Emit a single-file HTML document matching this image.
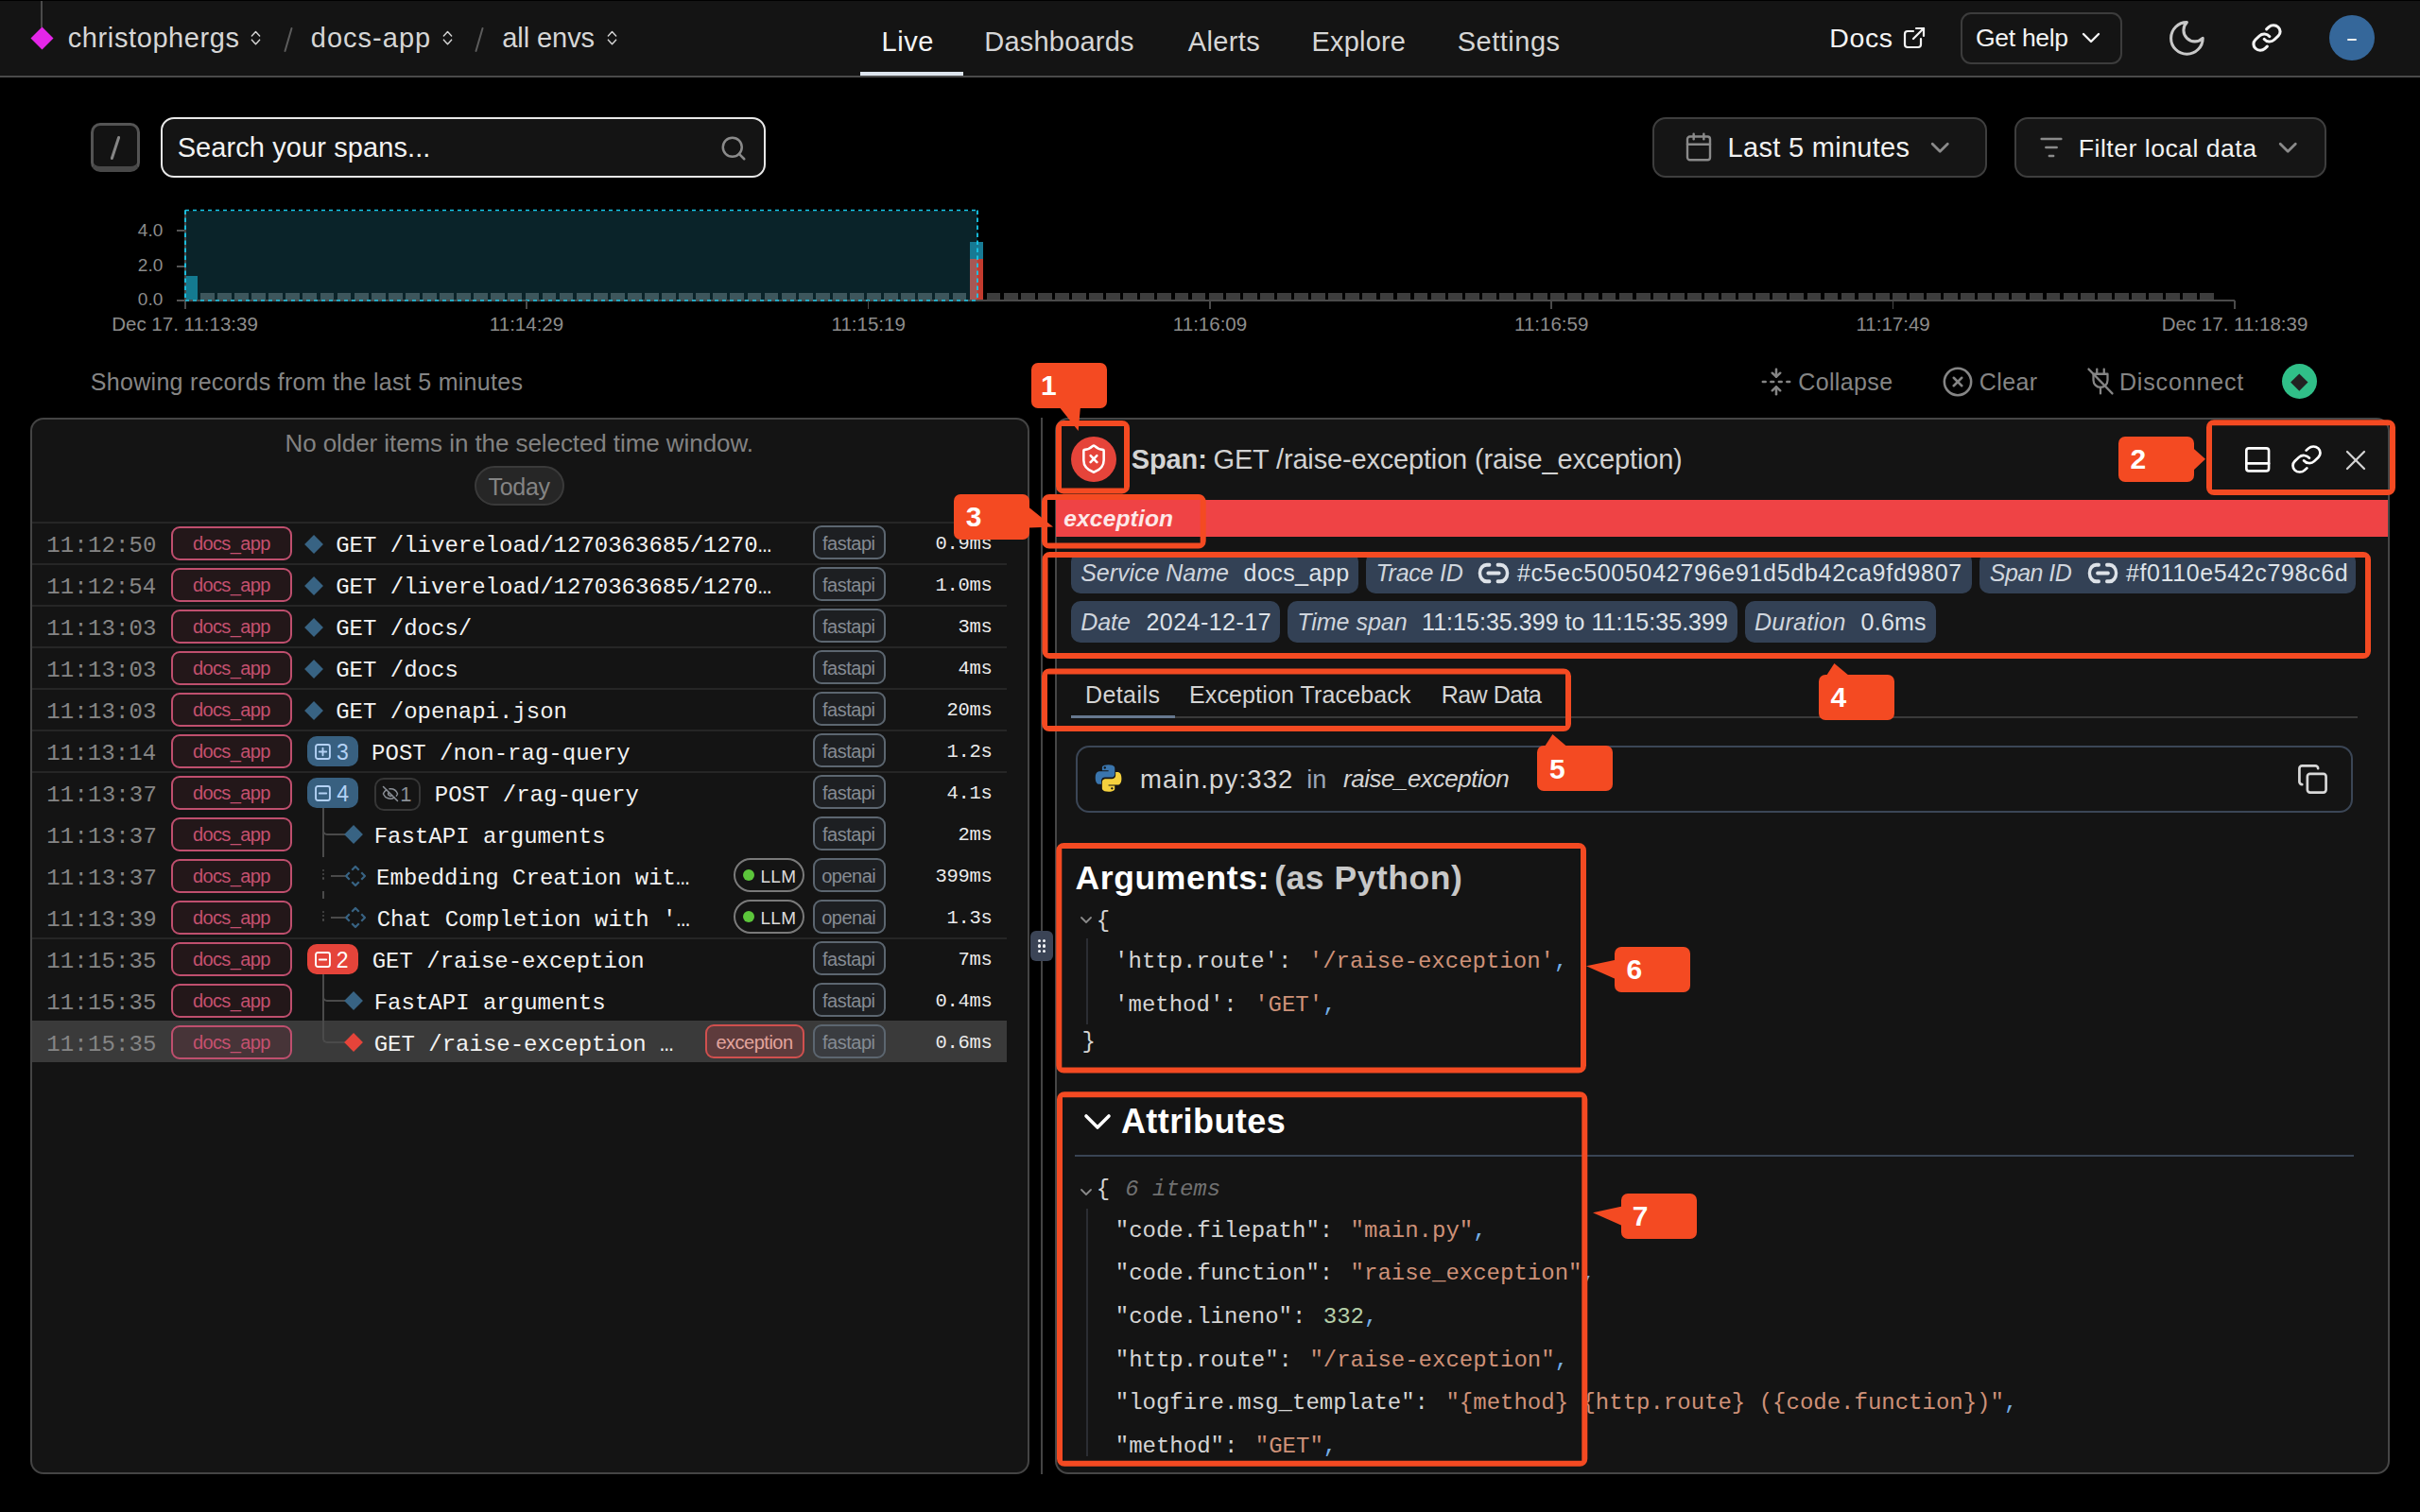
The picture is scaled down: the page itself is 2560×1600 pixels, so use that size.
<!DOCTYPE html>
<html><head><meta charset="utf-8"><style>
html,body{margin:0;padding:0;background:#000;width:2560px;height:1600px;overflow:hidden;position:relative;font-family:'Liberation Sans', sans-serif}
</style></head><body>
<div style="position:absolute;left:0px;top:1px;width:2560px;height:79px;background:#141414"></div>
<div style="position:absolute;left:0px;top:80px;width:2560px;height:2px;background:#4a4a4a"></div>
<div style="position:absolute;left:43px;top:1px;width:2px;height:28px;background:#4a4a4a"></div>
<div style="position:absolute;left:35.5px;top:31.5px;width:17px;height:17px;background:#e426e8;transform:rotate(45deg)"></div>
<div style="position:absolute;top:26.00px;font-family:'Liberation Sans', sans-serif;font-size:29px;line-height:29px;color:#d6d6d6;white-space:pre;letter-spacing:0.600px;left:71.77px;">christophergs</div>
<div style="position:absolute;top:26.00px;font-family:'Liberation Sans', sans-serif;font-size:29px;line-height:29px;color:#d6d6d6;white-space:pre;letter-spacing:1.019px;left:328.78px;">docs-app</div>
<div style="position:absolute;top:26.00px;font-family:'Liberation Sans', sans-serif;font-size:29px;line-height:29px;color:#d6d6d6;white-space:pre;letter-spacing:-0.078px;left:531.27px;">all envs</div>
<svg style="position:absolute;left:265.0px;top:32px;width:11.0px;height:16px;overflow:visible" viewBox="0 0 12 16" preserveAspectRatio="none" fill="none" stroke="#d6d6d6" stroke-width="1.6" stroke-linecap="round" stroke-linejoin="round" ><path d="M1.5 6 L6 1.5 L10.5 6"/><path d="M1.5 10.2 L6 14.7 L10.5 10.2"/></svg>
<svg style="position:absolute;left:467.5px;top:32px;width:11.0px;height:16px;overflow:visible" viewBox="0 0 12 16" preserveAspectRatio="none" fill="none" stroke="#d6d6d6" stroke-width="1.6" stroke-linecap="round" stroke-linejoin="round" ><path d="M1.5 6 L6 1.5 L10.5 6"/><path d="M1.5 10.2 L6 14.7 L10.5 10.2"/></svg>
<svg style="position:absolute;left:641.5px;top:32px;width:11.0px;height:16px;overflow:visible" viewBox="0 0 12 16" preserveAspectRatio="none" fill="none" stroke="#d6d6d6" stroke-width="1.6" stroke-linecap="round" stroke-linejoin="round" ><path d="M1.5 6 L6 1.5 L10.5 6"/><path d="M1.5 10.2 L6 14.7 L10.5 10.2"/></svg>
<svg style="position:absolute;left:300px;top:29px;width:10px;height:26px;overflow:visible" viewBox="0 0 10 26" preserveAspectRatio="none" fill="none" stroke="#5c5c5c" stroke-width="2" stroke-linecap="round" stroke-linejoin="round" ><path d="M8.5 1 L1.5 25"/></svg>
<svg style="position:absolute;left:502px;top:29px;width:10px;height:26px;overflow:visible" viewBox="0 0 10 26" preserveAspectRatio="none" fill="none" stroke="#5c5c5c" stroke-width="2" stroke-linecap="round" stroke-linejoin="round" ><path d="M8.5 1 L1.5 25"/></svg>
<div style="position:absolute;top:30.00px;font-family:'Liberation Sans', sans-serif;font-size:29px;line-height:29px;color:#f4f4f4;white-space:pre;letter-spacing:0.489px;left:932.62px;">Live</div>
<div style="position:absolute;top:30.00px;font-family:'Liberation Sans', sans-serif;font-size:29px;line-height:29px;color:#d6d6d6;white-space:pre;letter-spacing:0.206px;left:1041.32px;">Dashboards</div>
<div style="position:absolute;top:30.00px;font-family:'Liberation Sans', sans-serif;font-size:29px;line-height:29px;color:#d6d6d6;white-space:pre;letter-spacing:0.375px;left:1256.74px;">Alerts</div>
<div style="position:absolute;top:30.00px;font-family:'Liberation Sans', sans-serif;font-size:29px;line-height:29px;color:#d6d6d6;white-space:pre;letter-spacing:0.157px;left:1387.62px;">Explore</div>
<div style="position:absolute;top:30.00px;font-family:'Liberation Sans', sans-serif;font-size:29px;line-height:29px;color:#d6d6d6;white-space:pre;letter-spacing:0.511px;left:1541.68px;">Settings</div>
<div style="position:absolute;left:910px;top:76px;width:109px;height:4px;background:#dde5ee"></div>
<div style="position:absolute;top:26.00px;font-family:'Liberation Sans', sans-serif;font-size:28.5px;line-height:28.5px;color:#f4f4f4;white-space:pre;letter-spacing:0.579px;left:1935.36px;">Docs</div>
<svg style="position:absolute;left:2013px;top:28px;width:24px;height:24px;overflow:visible" viewBox="0 0 24 24" preserveAspectRatio="none" fill="none" stroke="#f4f4f4" stroke-width="2.2" stroke-linecap="round" stroke-linejoin="round" ><path d="M14 2h8v8"/><path d="M11 13 22 2"/><path d="M19 13v6a3 3 0 0 1-3 3H5a3 3 0 0 1-3-3V8a3 3 0 0 1 3-3h6"/></svg>
<div style="position:absolute;left:2074px;top:12.5px;width:171px;height:55.0px;box-sizing:border-box;border:2px solid #3c3c3c;border-radius:11px;background:#141414"></div>
<div style="position:absolute;top:27.00px;font-family:'Liberation Sans', sans-serif;font-size:26.5px;line-height:26.5px;color:#f4f4f4;white-space:pre;letter-spacing:-0.305px;left:2090.07px;">Get help</div>
<svg style="position:absolute;left:2203px;top:35px;width:18px;height:10px;overflow:visible" viewBox="0 0 18 10" preserveAspectRatio="none" fill="none" stroke="#f4f4f4" stroke-width="2.4" stroke-linecap="round" stroke-linejoin="round" ><path d="M1 1 L9 9 L17 1"/></svg>
<svg style="position:absolute;left:2291.4px;top:17.6px;width:44.79999999999973px;height:44.8px;overflow:visible" viewBox="0 0 24 24" preserveAspectRatio="none" fill="none" stroke="#c8c8c8" stroke-width="1.65" stroke-linecap="round" stroke-linejoin="round" ><path d="M12 3a6 6 0 0 0 9 9 9 9 0 1 1-9-9Z"/></svg>
<svg style="position:absolute;left:2381px;top:24px;width:34px;height:32px;overflow:visible" viewBox="0 0 24 24" preserveAspectRatio="none" fill="none" stroke="#f4f4f4" stroke-width="2.2" stroke-linecap="round" stroke-linejoin="round" ><path d="M10 13a5 5 0 0 0 7.54.54l3-3a5 5 0 0 0-7.07-7.07l-1.72 1.71"/><path d="M14 11a5 5 0 0 0-7.54-.54l-3 3a5 5 0 0 0 7.07 7.07l1.71-1.71"/></svg>
<div style="position:absolute;left:2464px;top:16px;width:48px;height:48px;border-radius:50%;background:#35679a"></div>
<div style="position:absolute;left:2483px;top:40.8px;width:10px;height:2.200000000000003px;background:#f0f0f0;border-radius:1px"></div>
<div style="position:absolute;left:96.3px;top:130px;width:51.60000000000001px;height:51.80000000000001px;box-sizing:border-box;border:3.6px solid #545454;border-bottom:6px solid #484848;border-radius:10px;background:#131313"></div>
<svg style="position:absolute;left:116px;top:144px;width:12px;height:25px;overflow:visible" viewBox="0 0 12 25" preserveAspectRatio="none" fill="none" stroke="#858585" stroke-width="3" stroke-linecap="round" stroke-linejoin="round" ><path d="M9.6 1.5 L2.4 23.5"/></svg>
<div style="position:absolute;left:170px;top:124px;width:640px;height:64px;box-sizing:border-box;border:2px solid #e8e8e8;border-radius:14px;background:#141414"></div>
<div style="position:absolute;top:142.00px;font-family:'Liberation Sans', sans-serif;font-size:29px;line-height:29px;color:#f2f2f2;white-space:pre;letter-spacing:0.089px;left:187.68px;">Search your spans...</div>
<svg style="position:absolute;left:761px;top:142px;width:30px;height:30px;overflow:visible" viewBox="0 0 24 24" preserveAspectRatio="none" fill="none" stroke="#8a8a8a" stroke-width="2" stroke-linecap="round" stroke-linejoin="round" ><circle cx="11" cy="11" r="8"/><path d="m21 21-4.3-4.3"/></svg>
<div style="position:absolute;left:1747.5px;top:124px;width:354.5px;height:64px;box-sizing:border-box;border:2px solid #3e3e3e;border-radius:14px;background:#151515"></div>
<svg style="position:absolute;left:1781px;top:139px;width:32px;height:33px;overflow:visible" viewBox="0 0 24 24" preserveAspectRatio="none" fill="none" stroke="#8a8a8a" stroke-width="1.8" stroke-linecap="round" stroke-linejoin="round" ><rect width="18" height="18" x="3" y="4" rx="2" ry="2"/><line x1="16" x2="16" y1="2" y2="6"/><line x1="8" x2="8" y1="2" y2="6"/><line x1="3" x2="21" y1="10" y2="10"/></svg>
<div style="position:absolute;top:142.00px;font-family:'Liberation Sans', sans-serif;font-size:29px;line-height:29px;color:#f2f2f2;white-space:pre;letter-spacing:0.294px;left:1827.62px;">Last 5 minutes</div>
<svg style="position:absolute;left:2042.5px;top:150.5px;width:18.5px;height:10.5px;overflow:visible" viewBox="0 0 18.5 10.5" preserveAspectRatio="none" fill="none" stroke="#8a8a8a" stroke-width="2.8" stroke-linecap="round" stroke-linejoin="round" ><path d="M1.2 1.2 L9.25 9.3 L17.3 1.2"/></svg>
<div style="position:absolute;left:2131px;top:124px;width:330px;height:64px;box-sizing:border-box;border:2px solid #3e3e3e;border-radius:14px;background:#151515"></div>
<svg style="position:absolute;left:2156px;top:138px;width:28px;height:36px;overflow:visible" viewBox="0 0 24 24" preserveAspectRatio="none" fill="none" stroke="#8a8a8a" stroke-width="1.8" stroke-linecap="round" stroke-linejoin="round" ><path d="M3 6h18"/><path d="M7 12h10"/><path d="M10 18h4"/></svg>
<div style="position:absolute;top:144.00px;font-family:'Liberation Sans', sans-serif;font-size:26.6px;line-height:26.6px;color:#f2f2f2;white-space:pre;letter-spacing:0.491px;left:2198.82px;">Filter local data</div>
<svg style="position:absolute;left:2411px;top:150.5px;width:18.5px;height:10.5px;overflow:visible" viewBox="0 0 18.5 10.5" preserveAspectRatio="none" fill="none" stroke="#8a8a8a" stroke-width="2.8" stroke-linecap="round" stroke-linejoin="round" ><path d="M1.2 1.2 L9.25 9.3 L17.3 1.2"/></svg>
<div style="position:absolute;top:234.00px;font-family:'Liberation Sans', sans-serif;font-size:19px;line-height:19px;color:#8c8c8c;white-space:pre;left:145.83px;">4.0</div>
<div style="position:absolute;top:271.00px;font-family:'Liberation Sans', sans-serif;font-size:19px;line-height:19px;color:#8c8c8c;white-space:pre;left:145.83px;">2.0</div>
<div style="position:absolute;top:307.00px;font-family:'Liberation Sans', sans-serif;font-size:19px;line-height:19px;color:#8c8c8c;white-space:pre;left:145.83px;">0.0</div>
<div style="position:absolute;left:187px;top:243.2px;width:8px;height:1.6000000000000227px;background:#555"></div>
<div style="position:absolute;left:187px;top:281.2px;width:8px;height:1.6000000000000227px;background:#555"></div>
<div style="position:absolute;left:187px;top:317.2px;width:8px;height:1.6000000000000227px;background:#555"></div>
<div style="position:absolute;left:196px;top:222.5px;width:838px;height:95.5px;background:#0a2329"></div>
<div style="position:absolute;left:195.2px;top:222px;width:1.6000000000000227px;height:105px;background:#4a4a4a"></div>
<div style="position:absolute;left:212.00px;top:310.2px;width:14.8px;height:6.8px;background:#3d565c"></div><div style="position:absolute;left:230.08px;top:310.2px;width:14.8px;height:6.8px;background:#3d565c"></div><div style="position:absolute;left:248.16px;top:310.2px;width:14.8px;height:6.8px;background:#3d565c"></div><div style="position:absolute;left:266.24px;top:310.2px;width:14.8px;height:6.8px;background:#3d565c"></div><div style="position:absolute;left:284.32px;top:310.2px;width:14.8px;height:6.8px;background:#3d565c"></div><div style="position:absolute;left:302.40px;top:310.2px;width:14.8px;height:6.8px;background:#3d565c"></div><div style="position:absolute;left:320.48px;top:310.2px;width:14.8px;height:6.8px;background:#3d565c"></div><div style="position:absolute;left:338.56px;top:310.2px;width:14.8px;height:6.8px;background:#3d565c"></div><div style="position:absolute;left:356.64px;top:310.2px;width:14.8px;height:6.8px;background:#3d565c"></div><div style="position:absolute;left:374.72px;top:310.2px;width:14.8px;height:6.8px;background:#3d565c"></div><div style="position:absolute;left:392.80px;top:310.2px;width:14.8px;height:6.8px;background:#3d565c"></div><div style="position:absolute;left:410.88px;top:310.2px;width:14.8px;height:6.8px;background:#3d565c"></div><div style="position:absolute;left:428.96px;top:310.2px;width:14.8px;height:6.8px;background:#3d565c"></div><div style="position:absolute;left:447.04px;top:310.2px;width:14.8px;height:6.8px;background:#3d565c"></div><div style="position:absolute;left:465.12px;top:310.2px;width:14.8px;height:6.8px;background:#3d565c"></div><div style="position:absolute;left:483.20px;top:310.2px;width:14.8px;height:6.8px;background:#3d565c"></div><div style="position:absolute;left:501.28px;top:310.2px;width:14.8px;height:6.8px;background:#3d565c"></div><div style="position:absolute;left:519.36px;top:310.2px;width:14.8px;height:6.8px;background:#3d565c"></div><div style="position:absolute;left:537.44px;top:310.2px;width:14.8px;height:6.8px;background:#3d565c"></div><div style="position:absolute;left:555.52px;top:310.2px;width:14.8px;height:6.8px;background:#3d565c"></div><div style="position:absolute;left:573.60px;top:310.2px;width:14.8px;height:6.8px;background:#3d565c"></div><div style="position:absolute;left:591.68px;top:310.2px;width:14.8px;height:6.8px;background:#3d565c"></div><div style="position:absolute;left:609.76px;top:310.2px;width:14.8px;height:6.8px;background:#3d565c"></div><div style="position:absolute;left:627.84px;top:310.2px;width:14.8px;height:6.8px;background:#3d565c"></div><div style="position:absolute;left:645.92px;top:310.2px;width:14.8px;height:6.8px;background:#3d565c"></div><div style="position:absolute;left:664.00px;top:310.2px;width:14.8px;height:6.8px;background:#3d565c"></div><div style="position:absolute;left:682.08px;top:310.2px;width:14.8px;height:6.8px;background:#3d565c"></div><div style="position:absolute;left:700.16px;top:310.2px;width:14.8px;height:6.8px;background:#3d565c"></div><div style="position:absolute;left:718.24px;top:310.2px;width:14.8px;height:6.8px;background:#3d565c"></div><div style="position:absolute;left:736.32px;top:310.2px;width:14.8px;height:6.8px;background:#3d565c"></div><div style="position:absolute;left:754.40px;top:310.2px;width:14.8px;height:6.8px;background:#3d565c"></div><div style="position:absolute;left:772.48px;top:310.2px;width:14.8px;height:6.8px;background:#3d565c"></div><div style="position:absolute;left:790.56px;top:310.2px;width:14.8px;height:6.8px;background:#3d565c"></div><div style="position:absolute;left:808.64px;top:310.2px;width:14.8px;height:6.8px;background:#3d565c"></div><div style="position:absolute;left:826.72px;top:310.2px;width:14.8px;height:6.8px;background:#3d565c"></div><div style="position:absolute;left:844.80px;top:310.2px;width:14.8px;height:6.8px;background:#3d565c"></div><div style="position:absolute;left:862.88px;top:310.2px;width:14.8px;height:6.8px;background:#3d565c"></div><div style="position:absolute;left:880.96px;top:310.2px;width:14.8px;height:6.8px;background:#3d565c"></div><div style="position:absolute;left:899.04px;top:310.2px;width:14.8px;height:6.8px;background:#3d565c"></div><div style="position:absolute;left:917.12px;top:310.2px;width:14.8px;height:6.8px;background:#3d565c"></div><div style="position:absolute;left:935.20px;top:310.2px;width:14.8px;height:6.8px;background:#3d565c"></div><div style="position:absolute;left:953.28px;top:310.2px;width:14.8px;height:6.8px;background:#3d565c"></div><div style="position:absolute;left:971.36px;top:310.2px;width:14.8px;height:6.8px;background:#3d565c"></div><div style="position:absolute;left:989.44px;top:310.2px;width:14.8px;height:6.8px;background:#3d565c"></div><div style="position:absolute;left:1007.52px;top:310.2px;width:14.8px;height:6.8px;background:#3d565c"></div><div style="position:absolute;left:1043.68px;top:310.2px;width:14.8px;height:6.8px;background:#3d3d3d"></div><div style="position:absolute;left:1061.76px;top:310.2px;width:14.8px;height:6.8px;background:#3d3d3d"></div><div style="position:absolute;left:1079.84px;top:310.2px;width:14.8px;height:6.8px;background:#3d3d3d"></div><div style="position:absolute;left:1097.92px;top:310.2px;width:14.8px;height:6.8px;background:#3d3d3d"></div><div style="position:absolute;left:1116.00px;top:310.2px;width:14.8px;height:6.8px;background:#3d3d3d"></div><div style="position:absolute;left:1134.08px;top:310.2px;width:14.8px;height:6.8px;background:#3d3d3d"></div><div style="position:absolute;left:1152.16px;top:310.2px;width:14.8px;height:6.8px;background:#3d3d3d"></div><div style="position:absolute;left:1170.24px;top:310.2px;width:14.8px;height:6.8px;background:#3d3d3d"></div><div style="position:absolute;left:1188.32px;top:310.2px;width:14.8px;height:6.8px;background:#3d3d3d"></div><div style="position:absolute;left:1206.40px;top:310.2px;width:14.8px;height:6.8px;background:#3d3d3d"></div><div style="position:absolute;left:1224.48px;top:310.2px;width:14.8px;height:6.8px;background:#3d3d3d"></div><div style="position:absolute;left:1242.56px;top:310.2px;width:14.8px;height:6.8px;background:#3d3d3d"></div><div style="position:absolute;left:1260.64px;top:310.2px;width:14.8px;height:6.8px;background:#3d3d3d"></div><div style="position:absolute;left:1278.72px;top:310.2px;width:14.8px;height:6.8px;background:#3d3d3d"></div><div style="position:absolute;left:1296.80px;top:310.2px;width:14.8px;height:6.8px;background:#3d3d3d"></div><div style="position:absolute;left:1314.88px;top:310.2px;width:14.8px;height:6.8px;background:#3d3d3d"></div><div style="position:absolute;left:1332.96px;top:310.2px;width:14.8px;height:6.8px;background:#3d3d3d"></div><div style="position:absolute;left:1351.04px;top:310.2px;width:14.8px;height:6.8px;background:#3d3d3d"></div><div style="position:absolute;left:1369.12px;top:310.2px;width:14.8px;height:6.8px;background:#3d3d3d"></div><div style="position:absolute;left:1387.20px;top:310.2px;width:14.8px;height:6.8px;background:#3d3d3d"></div><div style="position:absolute;left:1405.28px;top:310.2px;width:14.8px;height:6.8px;background:#3d3d3d"></div><div style="position:absolute;left:1423.36px;top:310.2px;width:14.8px;height:6.8px;background:#3d3d3d"></div><div style="position:absolute;left:1441.44px;top:310.2px;width:14.8px;height:6.8px;background:#3d3d3d"></div><div style="position:absolute;left:1459.52px;top:310.2px;width:14.8px;height:6.8px;background:#3d3d3d"></div><div style="position:absolute;left:1477.60px;top:310.2px;width:14.8px;height:6.8px;background:#3d3d3d"></div><div style="position:absolute;left:1495.68px;top:310.2px;width:14.8px;height:6.8px;background:#3d3d3d"></div><div style="position:absolute;left:1513.76px;top:310.2px;width:14.8px;height:6.8px;background:#3d3d3d"></div><div style="position:absolute;left:1531.84px;top:310.2px;width:14.8px;height:6.8px;background:#3d3d3d"></div><div style="position:absolute;left:1549.92px;top:310.2px;width:14.8px;height:6.8px;background:#3d3d3d"></div><div style="position:absolute;left:1568.00px;top:310.2px;width:14.8px;height:6.8px;background:#3d3d3d"></div><div style="position:absolute;left:1586.08px;top:310.2px;width:14.8px;height:6.8px;background:#3d3d3d"></div><div style="position:absolute;left:1604.16px;top:310.2px;width:14.8px;height:6.8px;background:#3d3d3d"></div><div style="position:absolute;left:1622.24px;top:310.2px;width:14.8px;height:6.8px;background:#3d3d3d"></div><div style="position:absolute;left:1640.32px;top:310.2px;width:14.8px;height:6.8px;background:#3d3d3d"></div><div style="position:absolute;left:1658.40px;top:310.2px;width:14.8px;height:6.8px;background:#3d3d3d"></div><div style="position:absolute;left:1676.48px;top:310.2px;width:14.8px;height:6.8px;background:#3d3d3d"></div><div style="position:absolute;left:1694.56px;top:310.2px;width:14.8px;height:6.8px;background:#3d3d3d"></div><div style="position:absolute;left:1712.64px;top:310.2px;width:14.8px;height:6.8px;background:#3d3d3d"></div><div style="position:absolute;left:1730.72px;top:310.2px;width:14.8px;height:6.8px;background:#3d3d3d"></div><div style="position:absolute;left:1748.80px;top:310.2px;width:14.8px;height:6.8px;background:#3d3d3d"></div><div style="position:absolute;left:1766.88px;top:310.2px;width:14.8px;height:6.8px;background:#3d3d3d"></div><div style="position:absolute;left:1784.96px;top:310.2px;width:14.8px;height:6.8px;background:#3d3d3d"></div><div style="position:absolute;left:1803.04px;top:310.2px;width:14.8px;height:6.8px;background:#3d3d3d"></div><div style="position:absolute;left:1821.12px;top:310.2px;width:14.8px;height:6.8px;background:#3d3d3d"></div><div style="position:absolute;left:1839.20px;top:310.2px;width:14.8px;height:6.8px;background:#3d3d3d"></div><div style="position:absolute;left:1857.28px;top:310.2px;width:14.8px;height:6.8px;background:#3d3d3d"></div><div style="position:absolute;left:1875.36px;top:310.2px;width:14.8px;height:6.8px;background:#3d3d3d"></div><div style="position:absolute;left:1893.44px;top:310.2px;width:14.8px;height:6.8px;background:#3d3d3d"></div><div style="position:absolute;left:1911.52px;top:310.2px;width:14.8px;height:6.8px;background:#3d3d3d"></div><div style="position:absolute;left:1929.60px;top:310.2px;width:14.8px;height:6.8px;background:#3d3d3d"></div><div style="position:absolute;left:1947.68px;top:310.2px;width:14.8px;height:6.8px;background:#3d3d3d"></div><div style="position:absolute;left:1965.76px;top:310.2px;width:14.8px;height:6.8px;background:#3d3d3d"></div><div style="position:absolute;left:1983.84px;top:310.2px;width:14.8px;height:6.8px;background:#3d3d3d"></div><div style="position:absolute;left:2001.92px;top:310.2px;width:14.8px;height:6.8px;background:#3d3d3d"></div><div style="position:absolute;left:2020.00px;top:310.2px;width:14.8px;height:6.8px;background:#3d3d3d"></div><div style="position:absolute;left:2038.08px;top:310.2px;width:14.8px;height:6.8px;background:#3d3d3d"></div><div style="position:absolute;left:2056.16px;top:310.2px;width:14.8px;height:6.8px;background:#3d3d3d"></div><div style="position:absolute;left:2074.24px;top:310.2px;width:14.8px;height:6.8px;background:#3d3d3d"></div><div style="position:absolute;left:2092.32px;top:310.2px;width:14.8px;height:6.8px;background:#3d3d3d"></div><div style="position:absolute;left:2110.40px;top:310.2px;width:14.8px;height:6.8px;background:#3d3d3d"></div><div style="position:absolute;left:2128.48px;top:310.2px;width:14.8px;height:6.8px;background:#3d3d3d"></div><div style="position:absolute;left:2146.56px;top:310.2px;width:14.8px;height:6.8px;background:#3d3d3d"></div><div style="position:absolute;left:2164.64px;top:310.2px;width:14.8px;height:6.8px;background:#3d3d3d"></div><div style="position:absolute;left:2182.72px;top:310.2px;width:14.8px;height:6.8px;background:#3d3d3d"></div><div style="position:absolute;left:2200.80px;top:310.2px;width:14.8px;height:6.8px;background:#3d3d3d"></div><div style="position:absolute;left:2218.88px;top:310.2px;width:14.8px;height:6.8px;background:#3d3d3d"></div><div style="position:absolute;left:2236.96px;top:310.2px;width:14.8px;height:6.8px;background:#3d3d3d"></div><div style="position:absolute;left:2255.04px;top:310.2px;width:14.8px;height:6.8px;background:#3d3d3d"></div><div style="position:absolute;left:2273.12px;top:310.2px;width:14.8px;height:6.8px;background:#3d3d3d"></div><div style="position:absolute;left:2291.20px;top:310.2px;width:14.8px;height:6.8px;background:#3d3d3d"></div><div style="position:absolute;left:2309.28px;top:310.2px;width:14.8px;height:6.8px;background:#3d3d3d"></div><div style="position:absolute;left:2327.36px;top:310.2px;width:14.8px;height:6.8px;background:#3d3d3d"></div>
<div style="position:absolute;left:196.7px;top:292px;width:12.5px;height:25px;background:#147a90"></div>
<div style="position:absolute;left:1025.6px;top:256px;width:14.800000000000182px;height:18px;background:#177a94"></div>
<div style="position:absolute;left:1025.6px;top:274px;width:8.400000000000091px;height:43px;background:#a65855"></div>
<div style="position:absolute;left:1034px;top:274px;width:6.400000000000091px;height:43px;background:#c33b2e"></div>
<div style="position:absolute;left:195px;top:317.2px;width:2169px;height:1.6000000000000227px;background:#4a4a4a"></div>
<svg style="position:absolute;left:0;top:0;width:2560px;height:400px" viewBox="0 0 2560 400"><path d="M196 222.5 H1034" fill="none" stroke="#17c8ea" stroke-width="1.6" stroke-dasharray="4 4"/><path d="M196 318 H1034" fill="none" stroke="#17c8ea" stroke-width="1.6" stroke-dasharray="4 4"/><path d="M196 222.5 V318" fill="none" stroke="#17c8ea" stroke-width="1.8" stroke-dasharray="4.5 3.5"/><path d="M1034 222.5 V318" fill="none" stroke="#17c8ea" stroke-width="1.8" stroke-dasharray="4.5 3.5"/></svg>
<div style="position:absolute;left:194.7px;top:318px;width:1.6000000000000227px;height:9px;background:#4a4a4a"></div>
<div style="position:absolute;top:333.00px;font-family:'Liberation Sans', sans-serif;font-size:20.5px;line-height:20.5px;color:#8c8c8c;white-space:pre;left:118.19px;">Dec 17. 11:13:39</div>
<div style="position:absolute;left:556.2px;top:318px;width:1.599999999999909px;height:9px;background:#4a4a4a"></div>
<div style="position:absolute;top:333.00px;font-family:'Liberation Sans', sans-serif;font-size:20.5px;line-height:20.5px;color:#8c8c8c;white-space:pre;left:517.86px;">11:14:29</div>
<div style="position:absolute;left:917.9000000000001px;top:318px;width:1.599999999999909px;height:9px;background:#4a4a4a"></div>
<div style="position:absolute;top:333.00px;font-family:'Liberation Sans', sans-serif;font-size:20.5px;line-height:20.5px;color:#8c8c8c;white-space:pre;left:879.56px;">11:15:19</div>
<div style="position:absolute;left:1279.2px;top:318px;width:1.599999999999909px;height:9px;background:#4a4a4a"></div>
<div style="position:absolute;top:333.00px;font-family:'Liberation Sans', sans-serif;font-size:20.5px;line-height:20.5px;color:#8c8c8c;white-space:pre;left:1240.86px;">11:16:09</div>
<div style="position:absolute;left:1640.4px;top:318px;width:1.599999999999909px;height:9px;background:#4a4a4a"></div>
<div style="position:absolute;top:333.00px;font-family:'Liberation Sans', sans-serif;font-size:20.5px;line-height:20.5px;color:#8c8c8c;white-space:pre;left:1602.06px;">11:16:59</div>
<div style="position:absolute;left:2001.8px;top:318px;width:1.599999999999909px;height:9px;background:#4a4a4a"></div>
<div style="position:absolute;top:333.00px;font-family:'Liberation Sans', sans-serif;font-size:20.5px;line-height:20.5px;color:#8c8c8c;white-space:pre;left:1963.46px;">11:17:49</div>
<div style="position:absolute;left:2363.2px;top:318px;width:1.6000000000003638px;height:9px;background:#4a4a4a"></div>
<div style="position:absolute;top:333.00px;font-family:'Liberation Sans', sans-serif;font-size:20.5px;line-height:20.5px;color:#8c8c8c;white-space:pre;left:2286.69px;">Dec 17. 11:18:39</div>
<div style="position:absolute;top:392.00px;font-family:'Liberation Sans', sans-serif;font-size:25px;line-height:25px;color:#858585;white-space:pre;letter-spacing:0.290px;left:95.86px;">Showing records from the last 5 minutes</div>
<svg style="position:absolute;left:1862px;top:388px;width:34px;height:32px;overflow:visible" viewBox="0 0 24 24" preserveAspectRatio="none" fill="none" stroke="#858585" stroke-width="1.8" stroke-linecap="round" stroke-linejoin="round" ><path d="M12 22v-6"/><path d="M12 8V2"/><path d="M4 12H2"/><path d="M10 12H8"/><path d="M16 12h-2"/><path d="M22 12h-2"/><path d="m15 19-3-3-3 3"/><path d="m15 5-3 3-3-3"/></svg>
<div style="position:absolute;top:392.00px;font-family:'Liberation Sans', sans-serif;font-size:25px;line-height:25px;color:#858585;white-space:pre;letter-spacing:0.372px;left:1902.23px;">Collapse</div>
<svg style="position:absolute;left:2054px;top:387px;width:34px;height:34px;overflow:visible" viewBox="0 0 24 24" preserveAspectRatio="none" fill="none" stroke="#858585" stroke-width="1.8" stroke-linecap="round" stroke-linejoin="round" ><circle cx="12" cy="12" r="10"/><path d="m15 9-6 6"/><path d="m9 9 6 6"/></svg>
<div style="position:absolute;top:392.00px;font-family:'Liberation Sans', sans-serif;font-size:25px;line-height:25px;color:#858585;white-space:pre;letter-spacing:0.411px;left:2093.73px;">Clear</div>
<svg style="position:absolute;left:2207px;top:388px;width:30px;height:31px;overflow:visible" viewBox="0 0 24 24" preserveAspectRatio="none" fill="none" stroke="#858585" stroke-width="1.8" stroke-linecap="round" stroke-linejoin="round" ><path d="M9 2v4"/><path d="M15 2v4"/><path d="M12 17v5"/><path d="M6 6h12v5a6 6 0 0 1-12 0z"/><path d="M2 2 22 22"/></svg>
<div style="position:absolute;top:392.00px;font-family:'Liberation Sans', sans-serif;font-size:25px;line-height:25px;color:#858585;white-space:pre;letter-spacing:0.840px;left:2241.95px;">Disconnect</div>
<div style="position:absolute;left:2413.5px;top:385.3px;width:37.0px;height:37.0px;border-radius:50%;background:#30bf88"></div>
<div style="position:absolute;left:2425.7px;top:397.5px;width:12.6px;height:12.6px;background:#222;transform:rotate(45deg)"></div>
<div style="position:absolute;left:32px;top:442px;width:1057px;height:1118px;box-sizing:border-box;border:2px solid #444;border-radius:14px;background:#141414"></div>
<div style="position:absolute;top:456.00px;font-family:'Liberation Sans', sans-serif;font-size:26px;line-height:26px;color:#828282;white-space:pre;letter-spacing:-0.075px;left:301.47px;">No older items in the selected time window.</div>
<div style="position:absolute;left:502px;top:493px;width:94.5px;height:42px;box-sizing:border-box;border:2px solid #3a3a3a;border-radius:21px;background:#262626"></div>
<div style="position:absolute;top:503.00px;font-family:'Liberation Sans', sans-serif;font-size:25px;line-height:25px;color:#848484;white-space:pre;letter-spacing:-0.275px;left:516.44px;">Today</div>
<div style="position:absolute;left:34px;top:552px;width:1031px;height:2px;background:#262626"></div>
<div style="position:absolute;left:34px;top:596px;width:1031px;height:2px;background:#262626"></div>
<div style="position:absolute;left:34px;top:640px;width:1031px;height:2px;background:#262626"></div>
<div style="position:absolute;left:34px;top:684px;width:1031px;height:2px;background:#262626"></div>
<div style="position:absolute;left:34px;top:728px;width:1031px;height:2px;background:#262626"></div>
<div style="position:absolute;left:34px;top:772px;width:1031px;height:2px;background:#262626"></div>
<div style="position:absolute;left:34px;top:816px;width:1031px;height:2px;background:#262626"></div>
<div style="position:absolute;left:34px;top:992px;width:1031px;height:2px;background:#262626"></div>
<div style="position:absolute;left:34px;top:1080px;width:1031px;height:44px;background:#3a3a3a"></div>
<div style="position:absolute;top:566.00px;font-family:'Liberation Mono', monospace;font-size:24px;line-height:24px;color:#858585;white-space:pre;letter-spacing:0.142px;left:49.27px;">11:12:50</div>
<div style="position:absolute;left:181.2px;top:557px;width:127.60000000000002px;height:36px;box-sizing:border-box;border:2.2px solid #bf4f6e;border-radius:9px;background:#231719"></div>
<div style="position:absolute;top:565.00px;font-family:'Liberation Sans', sans-serif;font-size:20px;line-height:20px;color:#c4506f;white-space:pre;letter-spacing:-0.600px;left:203.93px;">docs_app</div>
<div style="position:absolute;left:325.1px;top:568.9px;width:14.1px;height:14.1px;background:#386383;transform:rotate(45deg)"></div>
<div style="position:absolute;top:566.00px;font-family:'Liberation Mono', monospace;font-size:24px;line-height:24px;color:#f2f2f2;white-space:pre;left:355.18px;">GET /livereload/1270363685/1270…</div>
<div style="position:absolute;left:859.5px;top:556.4px;width:77.0px;height:35.200000000000045px;box-sizing:border-box;border:2.2px solid #5c6670;border-radius:9px;background:#1d1f22"></div>
<div style="position:absolute;top:565.00px;font-family:'Liberation Sans', sans-serif;font-size:20px;line-height:20px;color:#858b93;white-space:pre;letter-spacing:-0.500px;left:870.04px;">fastapi</div>
<div style="position:absolute;top:566.00px;font-family:'Liberation Mono', monospace;font-size:20.5px;line-height:20.5px;color:#ebebeb;white-space:pre;letter-spacing:-0.300px;left:989.38px;">0.9ms</div>
<div style="position:absolute;top:610.00px;font-family:'Liberation Mono', monospace;font-size:24px;line-height:24px;color:#858585;white-space:pre;letter-spacing:0.105px;left:49.27px;">11:12:54</div>
<div style="position:absolute;left:181.2px;top:601px;width:127.60000000000002px;height:36px;box-sizing:border-box;border:2.2px solid #bf4f6e;border-radius:9px;background:#231719"></div>
<div style="position:absolute;top:609.00px;font-family:'Liberation Sans', sans-serif;font-size:20px;line-height:20px;color:#c4506f;white-space:pre;letter-spacing:-0.600px;left:203.93px;">docs_app</div>
<div style="position:absolute;left:325.1px;top:612.9px;width:14.1px;height:14.1px;background:#386383;transform:rotate(45deg)"></div>
<div style="position:absolute;top:610.00px;font-family:'Liberation Mono', monospace;font-size:24px;line-height:24px;color:#f2f2f2;white-space:pre;left:355.18px;">GET /livereload/1270363685/1270…</div>
<div style="position:absolute;left:859.5px;top:600.4px;width:77.0px;height:35.200000000000045px;box-sizing:border-box;border:2.2px solid #5c6670;border-radius:9px;background:#1d1f22"></div>
<div style="position:absolute;top:609.00px;font-family:'Liberation Sans', sans-serif;font-size:20px;line-height:20px;color:#858b93;white-space:pre;letter-spacing:-0.500px;left:870.04px;">fastapi</div>
<div style="position:absolute;top:610.00px;font-family:'Liberation Mono', monospace;font-size:20.5px;line-height:20.5px;color:#ebebeb;white-space:pre;letter-spacing:-0.300px;left:989.38px;">1.0ms</div>
<div style="position:absolute;top:654.00px;font-family:'Liberation Mono', monospace;font-size:24px;line-height:24px;color:#858585;white-space:pre;letter-spacing:0.148px;left:49.27px;">11:13:03</div>
<div style="position:absolute;left:181.2px;top:645px;width:127.60000000000002px;height:36px;box-sizing:border-box;border:2.2px solid #bf4f6e;border-radius:9px;background:#231719"></div>
<div style="position:absolute;top:653.00px;font-family:'Liberation Sans', sans-serif;font-size:20px;line-height:20px;color:#c4506f;white-space:pre;letter-spacing:-0.600px;left:203.93px;">docs_app</div>
<div style="position:absolute;left:325.1px;top:656.9px;width:14.1px;height:14.1px;background:#386383;transform:rotate(45deg)"></div>
<div style="position:absolute;top:654.00px;font-family:'Liberation Mono', monospace;font-size:24px;line-height:24px;color:#f2f2f2;white-space:pre;left:355.18px;">GET /docs/</div>
<div style="position:absolute;left:859.5px;top:644.4px;width:77.0px;height:35.200000000000045px;box-sizing:border-box;border:2.2px solid #5c6670;border-radius:9px;background:#1d1f22"></div>
<div style="position:absolute;top:653.00px;font-family:'Liberation Sans', sans-serif;font-size:20px;line-height:20px;color:#858b93;white-space:pre;letter-spacing:-0.500px;left:870.04px;">fastapi</div>
<div style="position:absolute;top:654.00px;font-family:'Liberation Mono', monospace;font-size:20.5px;line-height:20.5px;color:#ebebeb;white-space:pre;letter-spacing:-0.300px;left:1013.39px;">3ms</div>
<div style="position:absolute;top:698.00px;font-family:'Liberation Mono', monospace;font-size:24px;line-height:24px;color:#858585;white-space:pre;letter-spacing:0.148px;left:49.27px;">11:13:03</div>
<div style="position:absolute;left:181.2px;top:689px;width:127.60000000000002px;height:36px;box-sizing:border-box;border:2.2px solid #bf4f6e;border-radius:9px;background:#231719"></div>
<div style="position:absolute;top:697.00px;font-family:'Liberation Sans', sans-serif;font-size:20px;line-height:20px;color:#c4506f;white-space:pre;letter-spacing:-0.600px;left:203.93px;">docs_app</div>
<div style="position:absolute;left:325.1px;top:700.9px;width:14.1px;height:14.1px;background:#386383;transform:rotate(45deg)"></div>
<div style="position:absolute;top:698.00px;font-family:'Liberation Mono', monospace;font-size:24px;line-height:24px;color:#f2f2f2;white-space:pre;left:355.18px;">GET /docs</div>
<div style="position:absolute;left:859.5px;top:688.4px;width:77.0px;height:35.200000000000045px;box-sizing:border-box;border:2.2px solid #5c6670;border-radius:9px;background:#1d1f22"></div>
<div style="position:absolute;top:697.00px;font-family:'Liberation Sans', sans-serif;font-size:20px;line-height:20px;color:#858b93;white-space:pre;letter-spacing:-0.500px;left:870.04px;">fastapi</div>
<div style="position:absolute;top:698.00px;font-family:'Liberation Mono', monospace;font-size:20.5px;line-height:20.5px;color:#ebebeb;white-space:pre;letter-spacing:-0.300px;left:1013.39px;">4ms</div>
<div style="position:absolute;top:742.00px;font-family:'Liberation Mono', monospace;font-size:24px;line-height:24px;color:#858585;white-space:pre;letter-spacing:0.148px;left:49.27px;">11:13:03</div>
<div style="position:absolute;left:181.2px;top:733px;width:127.60000000000002px;height:36px;box-sizing:border-box;border:2.2px solid #bf4f6e;border-radius:9px;background:#231719"></div>
<div style="position:absolute;top:741.00px;font-family:'Liberation Sans', sans-serif;font-size:20px;line-height:20px;color:#c4506f;white-space:pre;letter-spacing:-0.600px;left:203.93px;">docs_app</div>
<div style="position:absolute;left:325.1px;top:744.9px;width:14.1px;height:14.1px;background:#386383;transform:rotate(45deg)"></div>
<div style="position:absolute;top:742.00px;font-family:'Liberation Mono', monospace;font-size:24px;line-height:24px;color:#f2f2f2;white-space:pre;left:355.18px;">GET /openapi.json</div>
<div style="position:absolute;left:859.5px;top:732.4px;width:77.0px;height:35.200000000000045px;box-sizing:border-box;border:2.2px solid #5c6670;border-radius:9px;background:#1d1f22"></div>
<div style="position:absolute;top:741.00px;font-family:'Liberation Sans', sans-serif;font-size:20px;line-height:20px;color:#858b93;white-space:pre;letter-spacing:-0.500px;left:870.04px;">fastapi</div>
<div style="position:absolute;top:742.00px;font-family:'Liberation Mono', monospace;font-size:20.5px;line-height:20.5px;color:#ebebeb;white-space:pre;letter-spacing:-0.300px;left:1001.38px;">20ms</div>
<div style="position:absolute;top:786.00px;font-family:'Liberation Mono', monospace;font-size:24px;line-height:24px;color:#858585;white-space:pre;letter-spacing:0.105px;left:49.27px;">11:13:14</div>
<div style="position:absolute;left:181.2px;top:777px;width:127.60000000000002px;height:36px;box-sizing:border-box;border:2.2px solid #bf4f6e;border-radius:9px;background:#231719"></div>
<div style="position:absolute;top:785.00px;font-family:'Liberation Sans', sans-serif;font-size:20px;line-height:20px;color:#c4506f;white-space:pre;letter-spacing:-0.600px;left:203.93px;">docs_app</div>
<div style="position:absolute;left:325px;top:779px;width:54px;height:32px;background:#386080;border-radius:10px"></div>
<svg style="position:absolute;left:332.5px;top:787px;width:17.0px;height:17px;overflow:visible" viewBox="0 0 16 16" preserveAspectRatio="none" fill="none" stroke="#b4d2f5" stroke-width="1.8" stroke-linecap="round" stroke-linejoin="round" ><rect x="1" y="1" width="14" height="14" rx="2"/><path d="M4.5 8h7"/><path d="M8 4.5v7"/></svg>
<div style="position:absolute;top:785.00px;font-family:'Liberation Sans', sans-serif;font-size:23px;line-height:23px;color:#b4d2f5;white-space:pre;left:355.92px;">3</div>
<div style="position:absolute;top:786.00px;font-family:'Liberation Mono', monospace;font-size:24px;line-height:24px;color:#f2f2f2;white-space:pre;left:393.10px;">POST /non-rag-query</div>
<div style="position:absolute;left:859.5px;top:776.4px;width:77.0px;height:35.200000000000045px;box-sizing:border-box;border:2.2px solid #5c6670;border-radius:9px;background:#1d1f22"></div>
<div style="position:absolute;top:785.00px;font-family:'Liberation Sans', sans-serif;font-size:20px;line-height:20px;color:#858b93;white-space:pre;letter-spacing:-0.500px;left:870.04px;">fastapi</div>
<div style="position:absolute;top:786.00px;font-family:'Liberation Mono', monospace;font-size:20.5px;line-height:20.5px;color:#ebebeb;white-space:pre;letter-spacing:-0.300px;left:1001.38px;">1.2s</div>
<div style="position:absolute;top:830.00px;font-family:'Liberation Mono', monospace;font-size:24px;line-height:24px;color:#858585;white-space:pre;letter-spacing:0.199px;left:49.27px;">11:13:37</div>
<div style="position:absolute;left:181.2px;top:821px;width:127.60000000000002px;height:36px;box-sizing:border-box;border:2.2px solid #bf4f6e;border-radius:9px;background:#231719"></div>
<div style="position:absolute;top:829.00px;font-family:'Liberation Sans', sans-serif;font-size:20px;line-height:20px;color:#c4506f;white-space:pre;letter-spacing:-0.600px;left:203.93px;">docs_app</div>
<div style="position:absolute;left:325px;top:823px;width:54px;height:32px;background:#386080;border-radius:10px"></div>
<svg style="position:absolute;left:332.5px;top:831px;width:17.0px;height:17px;overflow:visible" viewBox="0 0 16 16" preserveAspectRatio="none" fill="none" stroke="#b4d2f5" stroke-width="1.8" stroke-linecap="round" stroke-linejoin="round" ><rect x="1" y="1" width="14" height="14" rx="2"/><path d="M4.5 8h7"/></svg>
<div style="position:absolute;top:829.00px;font-family:'Liberation Sans', sans-serif;font-size:23px;line-height:23px;color:#b4d2f5;white-space:pre;left:356.27px;">4</div>
<div style="position:absolute;left:395.5px;top:822.5px;width:49.5px;height:35.0px;box-sizing:border-box;border:2px solid #363636;border-radius:10px"></div>
<svg style="position:absolute;left:404px;top:831px;width:18px;height:18px;overflow:visible" viewBox="0 0 24 24" preserveAspectRatio="none" fill="none" stroke="#8a8f96" stroke-width="2" stroke-linecap="round" stroke-linejoin="round" ><path d="M10.733 5.076a10.744 10.744 0 0 1 11.205 6.575 1 1 0 0 1 0 .696 10.747 10.747 0 0 1-1.444 2.49"/><path d="M14.084 14.158a3 3 0 0 1-4.242-4.242"/><path d="M17.479 17.499a10.75 10.75 0 0 1-15.417-5.151 1 1 0 0 1 0-.696 10.75 10.75 0 0 1 4.446-5.143"/><path d="m2 2 20 20"/></svg>
<div style="position:absolute;top:830.00px;font-family:'Liberation Sans', sans-serif;font-size:22px;line-height:22px;color:#8a8f96;white-space:pre;left:423.32px;">1</div>
<div style="position:absolute;top:830.00px;font-family:'Liberation Mono', monospace;font-size:24px;line-height:24px;color:#f2f2f2;white-space:pre;left:459.80px;">POST /rag-query</div>
<div style="position:absolute;left:859.5px;top:820.4px;width:77.0px;height:35.200000000000045px;box-sizing:border-box;border:2.2px solid #5c6670;border-radius:9px;background:#1d1f22"></div>
<div style="position:absolute;top:829.00px;font-family:'Liberation Sans', sans-serif;font-size:20px;line-height:20px;color:#858b93;white-space:pre;letter-spacing:-0.500px;left:870.04px;">fastapi</div>
<div style="position:absolute;top:830.00px;font-family:'Liberation Mono', monospace;font-size:20.5px;line-height:20.5px;color:#ebebeb;white-space:pre;letter-spacing:-0.300px;left:1001.38px;">4.1s</div>
<div style="position:absolute;top:874.00px;font-family:'Liberation Mono', monospace;font-size:24px;line-height:24px;color:#858585;white-space:pre;letter-spacing:0.199px;left:49.27px;">11:13:37</div>
<div style="position:absolute;left:181.2px;top:865px;width:127.60000000000002px;height:36px;box-sizing:border-box;border:2.2px solid #bf4f6e;border-radius:9px;background:#231719"></div>
<div style="position:absolute;top:873.00px;font-family:'Liberation Sans', sans-serif;font-size:20px;line-height:20px;color:#c4506f;white-space:pre;letter-spacing:-0.600px;left:203.93px;">docs_app</div>
<div style="position:absolute;top:874.00px;font-family:'Liberation Mono', monospace;font-size:24px;line-height:24px;color:#f2f2f2;white-space:pre;left:395.73px;">FastAPI arguments</div>
<div style="position:absolute;left:859.5px;top:864.4px;width:77.0px;height:35.200000000000045px;box-sizing:border-box;border:2.2px solid #5c6670;border-radius:9px;background:#1d1f22"></div>
<div style="position:absolute;top:873.00px;font-family:'Liberation Sans', sans-serif;font-size:20px;line-height:20px;color:#858b93;white-space:pre;letter-spacing:-0.500px;left:870.04px;">fastapi</div>
<div style="position:absolute;top:874.00px;font-family:'Liberation Mono', monospace;font-size:20.5px;line-height:20.5px;color:#ebebeb;white-space:pre;letter-spacing:-0.300px;left:1013.39px;">2ms</div>
<div style="position:absolute;top:918.00px;font-family:'Liberation Mono', monospace;font-size:24px;line-height:24px;color:#858585;white-space:pre;letter-spacing:0.199px;left:49.27px;">11:13:37</div>
<div style="position:absolute;left:181.2px;top:909px;width:127.60000000000002px;height:36px;box-sizing:border-box;border:2.2px solid #bf4f6e;border-radius:9px;background:#231719"></div>
<div style="position:absolute;top:917.00px;font-family:'Liberation Sans', sans-serif;font-size:20px;line-height:20px;color:#c4506f;white-space:pre;letter-spacing:-0.600px;left:203.93px;">docs_app</div>
<div style="position:absolute;top:918.00px;font-family:'Liberation Mono', monospace;font-size:24px;line-height:24px;color:#f2f2f2;white-space:pre;left:398.10px;">Embedding Creation wit…</div>
<div style="position:absolute;left:776px;top:908.4px;width:74.5px;height:35.200000000000045px;box-sizing:border-box;border:2.2px solid #7a7a7a;border-radius:18px"></div>
<div style="position:absolute;left:786px;top:920px;width:12px;height:12px;border-radius:50%;background:#5cc63b"></div>
<div style="position:absolute;top:918.00px;font-family:'Liberation Sans', sans-serif;font-size:19px;line-height:19px;color:#dcdcdc;white-space:pre;letter-spacing:0.328px;left:804.44px;">LLM</div>
<div style="position:absolute;left:859.5px;top:908.4px;width:77.0px;height:35.200000000000045px;box-sizing:border-box;border:2.2px solid #5c6670;border-radius:9px;background:#1d1f22"></div>
<div style="position:absolute;top:917.00px;font-family:'Liberation Sans', sans-serif;font-size:20px;line-height:20px;color:#858b93;white-space:pre;letter-spacing:-0.500px;left:869.22px;">openai</div>
<div style="position:absolute;top:918.00px;font-family:'Liberation Mono', monospace;font-size:20.5px;line-height:20.5px;color:#ebebeb;white-space:pre;letter-spacing:-0.300px;left:989.38px;">399ms</div>
<div style="position:absolute;top:962.00px;font-family:'Liberation Mono', monospace;font-size:24px;line-height:24px;color:#858585;white-space:pre;letter-spacing:0.169px;left:49.27px;">11:13:39</div>
<div style="position:absolute;left:181.2px;top:953px;width:127.60000000000002px;height:36px;box-sizing:border-box;border:2.2px solid #bf4f6e;border-radius:9px;background:#231719"></div>
<div style="position:absolute;top:961.00px;font-family:'Liberation Sans', sans-serif;font-size:20px;line-height:20px;color:#c4506f;white-space:pre;letter-spacing:-0.600px;left:203.93px;">docs_app</div>
<div style="position:absolute;top:962.00px;font-family:'Liberation Mono', monospace;font-size:24px;line-height:24px;color:#f2f2f2;white-space:pre;left:398.68px;">Chat Completion with &#x27;…</div>
<div style="position:absolute;left:776px;top:952.4px;width:74.5px;height:35.200000000000045px;box-sizing:border-box;border:2.2px solid #7a7a7a;border-radius:18px"></div>
<div style="position:absolute;left:786px;top:964px;width:12px;height:12px;border-radius:50%;background:#5cc63b"></div>
<div style="position:absolute;top:962.00px;font-family:'Liberation Sans', sans-serif;font-size:19px;line-height:19px;color:#dcdcdc;white-space:pre;letter-spacing:0.328px;left:804.44px;">LLM</div>
<div style="position:absolute;left:859.5px;top:952.4px;width:77.0px;height:35.200000000000045px;box-sizing:border-box;border:2.2px solid #5c6670;border-radius:9px;background:#1d1f22"></div>
<div style="position:absolute;top:961.00px;font-family:'Liberation Sans', sans-serif;font-size:20px;line-height:20px;color:#858b93;white-space:pre;letter-spacing:-0.500px;left:869.22px;">openai</div>
<div style="position:absolute;top:962.00px;font-family:'Liberation Mono', monospace;font-size:20.5px;line-height:20.5px;color:#ebebeb;white-space:pre;letter-spacing:-0.300px;left:1001.38px;">1.3s</div>
<div style="position:absolute;top:1006.00px;font-family:'Liberation Mono', monospace;font-size:24px;line-height:24px;color:#858585;white-space:pre;letter-spacing:0.148px;left:49.27px;">11:15:35</div>
<div style="position:absolute;left:181.2px;top:997px;width:127.60000000000002px;height:36px;box-sizing:border-box;border:2.2px solid #bf4f6e;border-radius:9px;background:#231719"></div>
<div style="position:absolute;top:1005.00px;font-family:'Liberation Sans', sans-serif;font-size:20px;line-height:20px;color:#c4506f;white-space:pre;letter-spacing:-0.600px;left:203.93px;">docs_app</div>
<div style="position:absolute;left:325px;top:999px;width:54px;height:32px;background:#e5443a;border-radius:10px"></div>
<svg style="position:absolute;left:332.5px;top:1007px;width:17.0px;height:17px;overflow:visible" viewBox="0 0 16 16" preserveAspectRatio="none" fill="none" stroke="#ffffff" stroke-width="1.8" stroke-linecap="round" stroke-linejoin="round" ><rect x="1" y="1" width="14" height="14" rx="2"/><path d="M4.5 8h7"/></svg>
<div style="position:absolute;top:1005.00px;font-family:'Liberation Sans', sans-serif;font-size:23px;line-height:23px;color:#ffffff;white-space:pre;left:355.64px;">2</div>
<div style="position:absolute;top:1006.00px;font-family:'Liberation Mono', monospace;font-size:24px;line-height:24px;color:#f2f2f2;white-space:pre;left:393.68px;">GET /raise-exception</div>
<div style="position:absolute;left:859.5px;top:996.4px;width:77.0px;height:35.19999999999993px;box-sizing:border-box;border:2.2px solid #5c6670;border-radius:9px;background:#1d1f22"></div>
<div style="position:absolute;top:1005.00px;font-family:'Liberation Sans', sans-serif;font-size:20px;line-height:20px;color:#858b93;white-space:pre;letter-spacing:-0.500px;left:870.04px;">fastapi</div>
<div style="position:absolute;top:1006.00px;font-family:'Liberation Mono', monospace;font-size:20.5px;line-height:20.5px;color:#ebebeb;white-space:pre;letter-spacing:-0.300px;left:1013.39px;">7ms</div>
<div style="position:absolute;top:1050.00px;font-family:'Liberation Mono', monospace;font-size:24px;line-height:24px;color:#858585;white-space:pre;letter-spacing:0.148px;left:49.27px;">11:15:35</div>
<div style="position:absolute;left:181.2px;top:1041px;width:127.60000000000002px;height:36px;box-sizing:border-box;border:2.2px solid #bf4f6e;border-radius:9px;background:#231719"></div>
<div style="position:absolute;top:1049.00px;font-family:'Liberation Sans', sans-serif;font-size:20px;line-height:20px;color:#c4506f;white-space:pre;letter-spacing:-0.600px;left:203.93px;">docs_app</div>
<div style="position:absolute;top:1050.00px;font-family:'Liberation Mono', monospace;font-size:24px;line-height:24px;color:#f2f2f2;white-space:pre;left:395.73px;">FastAPI arguments</div>
<div style="position:absolute;left:859.5px;top:1040.4px;width:77.0px;height:35.19999999999982px;box-sizing:border-box;border:2.2px solid #5c6670;border-radius:9px;background:#1d1f22"></div>
<div style="position:absolute;top:1049.00px;font-family:'Liberation Sans', sans-serif;font-size:20px;line-height:20px;color:#858b93;white-space:pre;letter-spacing:-0.500px;left:870.04px;">fastapi</div>
<div style="position:absolute;top:1050.00px;font-family:'Liberation Mono', monospace;font-size:20.5px;line-height:20.5px;color:#ebebeb;white-space:pre;letter-spacing:-0.300px;left:989.38px;">0.4ms</div>
<div style="position:absolute;top:1094.00px;font-family:'Liberation Mono', monospace;font-size:24px;line-height:24px;color:#858585;white-space:pre;letter-spacing:0.148px;left:49.27px;">11:15:35</div>
<div style="position:absolute;left:181.2px;top:1085px;width:127.60000000000002px;height:36px;box-sizing:border-box;border:2.2px solid #bf4f6e;border-radius:9px;background:#473438"></div>
<div style="position:absolute;top:1093.00px;font-family:'Liberation Sans', sans-serif;font-size:20px;line-height:20px;color:#c4506f;white-space:pre;letter-spacing:-0.600px;left:203.93px;">docs_app</div>
<div style="position:absolute;top:1094.00px;font-family:'Liberation Mono', monospace;font-size:24px;line-height:24px;color:#f2f2f2;white-space:pre;left:395.68px;">GET /raise-exception …</div>
<div style="position:absolute;left:746px;top:1084.4px;width:104.5px;height:35.19999999999982px;box-sizing:border-box;border:2.2px solid #d0504e;border-radius:9px;background:#5e3b3c"></div>
<div style="position:absolute;top:1093.00px;font-family:'Liberation Sans', sans-serif;font-size:20px;line-height:20px;color:#e3a49d;white-space:pre;letter-spacing:-0.500px;left:757.49px;">exception</div>
<div style="position:absolute;left:859.5px;top:1084.4px;width:77.0px;height:35.19999999999982px;box-sizing:border-box;border:2.2px solid #5c6670;border-radius:9px;background:#3a3c40"></div>
<div style="position:absolute;top:1093.00px;font-family:'Liberation Sans', sans-serif;font-size:20px;line-height:20px;color:#858b93;white-space:pre;letter-spacing:-0.500px;left:870.04px;">fastapi</div>
<div style="position:absolute;top:1094.00px;font-family:'Liberation Mono', monospace;font-size:20.5px;line-height:20.5px;color:#ebebeb;white-space:pre;letter-spacing:-0.300px;left:989.38px;">0.6ms</div>
<div style="position:absolute;left:341px;top:855px;width:2px;height:52px;background:#4a4a4a"></div>
<div style="position:absolute;left:341px;top:871px;width:24px;height:13px;box-sizing:border-box;border-left:2px solid #4a4a4a;border-bottom:2px solid #4a4a4a;border-bottom-left-radius:5px"></div>
<div style="position:absolute;left:367.4px;top:875.9px;width:14.1px;height:14.1px;background:#386383;transform:rotate(45deg)"></div>
<div style="position:absolute;left:340.7px;top:919.5px;width:2.6000000000000227px;height:2.6000000000000227px;background:#4a4a4a;border-radius:50%"></div>
<div style="position:absolute;left:340.7px;top:923.9px;width:2.6000000000000227px;height:2.6000000000000227px;background:#4a4a4a;border-radius:50%"></div>
<div style="position:absolute;left:340.7px;top:928.3px;width:2.6000000000000227px;height:2.6000000000000227px;background:#4a4a4a;border-radius:50%"></div>
<div style="position:absolute;left:350px;top:926px;width:15px;height:2px;background:#4a4a4a"></div>
<svg style="position:absolute;left:364.5px;top:916px;width:22.0px;height:22px;overflow:visible" viewBox="0 0 22 22" preserveAspectRatio="none" fill="none" stroke="#386383" stroke-width="2.2" stroke-linecap="round" stroke-linejoin="round" ><path d="M11 1 L21 11 L11 21 L1 11 Z" stroke-dasharray="10.6 3.54" stroke-dashoffset="5.3" stroke-linecap="butt"/></svg>
<div style="position:absolute;left:340.7px;top:963.5px;width:2.6000000000000227px;height:2.6000000000000227px;background:#4a4a4a;border-radius:50%"></div>
<div style="position:absolute;left:340.7px;top:967.9px;width:2.6000000000000227px;height:2.6000000000000227px;background:#4a4a4a;border-radius:50%"></div>
<div style="position:absolute;left:340.7px;top:972.3px;width:2.6000000000000227px;height:2.6000000000000227px;background:#4a4a4a;border-radius:50%"></div>
<div style="position:absolute;left:350px;top:970px;width:15px;height:2px;background:#4a4a4a"></div>
<svg style="position:absolute;left:364.5px;top:960px;width:22.0px;height:22px;overflow:visible" viewBox="0 0 22 22" preserveAspectRatio="none" fill="none" stroke="#386383" stroke-width="2.2" stroke-linecap="round" stroke-linejoin="round" ><path d="M11 1 L21 11 L11 21 L1 11 Z" stroke-dasharray="10.6 3.54" stroke-dashoffset="5.3" stroke-linecap="butt"/></svg>
<div style="position:absolute;left:341px;top:943px;width:2px;height:7.5px;background:#4a4a4a"></div>
<div style="position:absolute;left:341px;top:1031px;width:2px;height:62px;background:#4a4a4a"></div>
<div style="position:absolute;left:341px;top:1047px;width:24px;height:13px;box-sizing:border-box;border-left:2px solid #4a4a4a;border-bottom:2px solid #4a4a4a;border-bottom-left-radius:5px"></div>
<div style="position:absolute;left:367.4px;top:1051.9px;width:14.1px;height:14.1px;background:#386383;transform:rotate(45deg)"></div>
<div style="position:absolute;left:341px;top:1091px;width:24px;height:13px;box-sizing:border-box;border-left:2px solid #4a4a4a;border-bottom:2px solid #4a4a4a;border-bottom-left-radius:5px"></div>
<div style="position:absolute;left:367.4px;top:1095.9px;width:14.1px;height:14.1px;background:#e5443a;transform:rotate(45deg)"></div>
<div style="position:absolute;left:1101px;top:442px;width:2px;height:1118px;background:#444"></div>
<div style="position:absolute;left:1090px;top:985px;width:23.5px;height:32px;background:#3b4456;border-radius:6px"></div>
<div style="position:absolute;left:1097.8000000000002px;top:994.0px;width:3.199999999999818px;height:3.2000000000000455px;background:#f2f4f8;border-radius:50%"></div>
<div style="position:absolute;left:1097.8000000000002px;top:999.4px;width:3.199999999999818px;height:3.2000000000000455px;background:#f2f4f8;border-radius:50%"></div>
<div style="position:absolute;left:1097.8000000000002px;top:1004.6999999999999px;width:3.199999999999818px;height:3.2000000000000455px;background:#f2f4f8;border-radius:50%"></div>
<div style="position:absolute;left:1103.0px;top:994.0px;width:3.199999999999818px;height:3.2000000000000455px;background:#f2f4f8;border-radius:50%"></div>
<div style="position:absolute;left:1103.0px;top:999.4px;width:3.199999999999818px;height:3.2000000000000455px;background:#f2f4f8;border-radius:50%"></div>
<div style="position:absolute;left:1103.0px;top:1004.6999999999999px;width:3.199999999999818px;height:3.2000000000000455px;background:#f2f4f8;border-radius:50%"></div>
<div style="position:absolute;left:1115.5px;top:442px;width:1412.5px;height:1118px;box-sizing:border-box;border:2px solid #464646;border-radius:14px;background:#141414"></div>
<div style="position:absolute;left:1133px;top:462px;width:48px;height:48px;border-radius:50%;background:#e5443a"></div>
<svg style="position:absolute;left:1145px;top:471px;width:24px;height:30px;overflow:visible" viewBox="3 1.5 18 21.5" preserveAspectRatio="none" fill="none" stroke="#fff" stroke-width="1.9" stroke-linecap="round" stroke-linejoin="round" ><path d="M20 13c0 5-3.5 7.5-7.66 8.95a1 1 0 0 1-.67-.01C7.5 20.5 4 18 4 13V6a1 1 0 0 1 1-1c2 0 4.5-1.2 6.24-2.72a1.17 1.17 0 0 1 1.52 0C14.51 3.81 17 5 19 5a1 1 0 0 1 1 1z"/><path d="m14.5 9.5-5 5"/><path d="m9.5 9.5 5 5"/></svg>
<div style="position:absolute;top:472.00px;font-family:'Liberation Sans', sans-serif;font-size:29px;line-height:29px;color:#d4d4d4;white-space:pre;font-weight:700;letter-spacing:-0.158px;left:1196.86px;">Span:</div>
<div style="position:absolute;top:472.00px;font-family:'Liberation Sans', sans-serif;font-size:29px;line-height:29px;color:#d2d2d2;white-space:pre;letter-spacing:-0.166px;left:1283.54px;">GET /raise-exception (raise_exception)</div>
<svg style="position:absolute;left:2374.9px;top:472.6px;width:26.40000000000009px;height:26.799999999999955px;overflow:visible" viewBox="2 2 20 20" preserveAspectRatio="none" fill="none" stroke="#ffffff" stroke-width="2.0" stroke-linecap="round" stroke-linejoin="round" ><rect width="18" height="18" x="3" y="3" rx="2"/><path d="M3 15h18"/></svg>
<svg style="position:absolute;left:2424px;top:471px;width:32px;height:30px;overflow:visible" viewBox="1 1 22 22" preserveAspectRatio="none" fill="none" stroke="#ffffff" stroke-width="1.9" stroke-linecap="round" stroke-linejoin="round" ><path d="M10 13a5 5 0 0 0 7.54.54l3-3a5 5 0 0 0-7.07-7.07l-1.72 1.71"/><path d="M14 11a5 5 0 0 0-7.54-.54l-3 3a5 5 0 0 0 7.07 7.07l1.71-1.71"/></svg>
<svg style="position:absolute;left:2482.8px;top:477.5px;width:18.0px;height:18.0px;overflow:visible" viewBox="6 6 12 12" preserveAspectRatio="none" fill="none" stroke="#d4d4d4" stroke-width="1.5" stroke-linecap="round" stroke-linejoin="round" ><path d="M18 6 6 18"/><path d="m6 6 12 12"/></svg>
<div style="position:absolute;left:1117px;top:528.5px;width:1409px;height:39.0px;background:#ef4345"></div>
<div style="position:absolute;top:537.00px;font-family:'Liberation Sans', sans-serif;font-size:24.5px;line-height:24.5px;color:#fde9e9;white-space:pre;font-weight:700;font-style:italic;letter-spacing:0.177px;left:1125.25px;">exception</div>
<div style="position:absolute;left:1133.3px;top:584px;width:303.70000000000005px;height:43.60000000000002px;background:#334155;border-radius:10px"></div>
<div style="position:absolute;top:594.00px;font-family:'Liberation Sans', sans-serif;font-size:25px;line-height:25px;color:#cfd5dd;white-space:pre;font-style:italic;letter-spacing:-0.024px;left:1143.19px;">Service Name</div>
<div style="position:absolute;top:594.00px;font-family:'Liberation Sans', sans-serif;font-size:25px;line-height:25px;color:#dde2e8;white-space:pre;letter-spacing:0.440px;left:1315.55px;">docs_app</div>
<div style="position:absolute;left:1445px;top:584px;width:640.8000000000002px;height:43.60000000000002px;background:#334155;border-radius:10px"></div>
<div style="position:absolute;top:594.00px;font-family:'Liberation Sans', sans-serif;font-size:25px;line-height:25px;color:#cfd5dd;white-space:pre;font-style:italic;letter-spacing:-0.249px;left:1455.45px;">Trace ID</div>
<svg style="position:absolute;left:1564px;top:596px;width:32px;height:21px;overflow:visible" viewBox="1 6 22 12" preserveAspectRatio="none" fill="none" stroke="#dde2e8" stroke-width="2.4" stroke-linecap="round" stroke-linejoin="round" ><path d="M9 17H7A5 5 0 0 1 7 7h2"/><path d="M15 7h2a5 5 0 1 1 0 10h-2"/><line x1="8" x2="16" y1="12" y2="12"/></svg>
<div style="position:absolute;top:594.00px;font-family:'Liberation Sans', sans-serif;font-size:25px;line-height:25px;color:#dde2e8;white-space:pre;letter-spacing:0.710px;left:1604.89px;">#c5ec5005042796e91d5db42ca9fd9807</div>
<div style="position:absolute;left:2094px;top:584px;width:398.3000000000002px;height:43.60000000000002px;background:#334155;border-radius:10px"></div>
<div style="position:absolute;top:594.00px;font-family:'Liberation Sans', sans-serif;font-size:25px;line-height:25px;color:#cfd5dd;white-space:pre;font-style:italic;letter-spacing:-0.553px;left:2104.79px;">Span ID</div>
<svg style="position:absolute;left:2208.5px;top:596px;width:31.0px;height:21px;overflow:visible" viewBox="1 6 22 12" preserveAspectRatio="none" fill="none" stroke="#dde2e8" stroke-width="2.4" stroke-linecap="round" stroke-linejoin="round" ><path d="M9 17H7A5 5 0 0 1 7 7h2"/><path d="M15 7h2a5 5 0 1 1 0 10h-2"/><line x1="8" x2="16" y1="12" y2="12"/></svg>
<div style="position:absolute;top:594.00px;font-family:'Liberation Sans', sans-serif;font-size:25px;line-height:25px;color:#dde2e8;white-space:pre;letter-spacing:0.624px;left:2248.89px;">#f0110e542c798c6d</div>
<div style="position:absolute;left:1133.3px;top:636.2px;width:220.70000000000005px;height:43.5px;background:#334155;border-radius:10px"></div>
<div style="position:absolute;top:646.00px;font-family:'Liberation Sans', sans-serif;font-size:25px;line-height:25px;color:#cfd5dd;white-space:pre;font-style:italic;left:1143.13px;">Date</div>
<div style="position:absolute;top:646.00px;font-family:'Liberation Sans', sans-serif;font-size:25px;line-height:25px;color:#dde2e8;white-space:pre;letter-spacing:0.470px;left:1212.44px;">2024-12-17</div>
<div style="position:absolute;left:1362.3px;top:636.2px;width:475.29999999999995px;height:43.5px;background:#334155;border-radius:10px"></div>
<div style="position:absolute;top:646.00px;font-family:'Liberation Sans', sans-serif;font-size:25px;line-height:25px;color:#cfd5dd;white-space:pre;font-style:italic;left:1372.15px;">Time span</div>
<div style="position:absolute;top:646.00px;font-family:'Liberation Sans', sans-serif;font-size:25px;line-height:25px;color:#dde2e8;white-space:pre;letter-spacing:0.030px;left:1504.10px;">11:15:35.399 to 11:15:35.399</div>
<div style="position:absolute;left:1846.3px;top:636.2px;width:201.29999999999995px;height:43.5px;background:#334155;border-radius:10px"></div>
<div style="position:absolute;top:646.00px;font-family:'Liberation Sans', sans-serif;font-size:25px;line-height:25px;color:#cfd5dd;white-space:pre;font-style:italic;letter-spacing:0.287px;left:1855.93px;">Duration</div>
<div style="position:absolute;top:646.00px;font-family:'Liberation Sans', sans-serif;font-size:25px;line-height:25px;color:#dde2e8;white-space:pre;letter-spacing:0.225px;left:1968.62px;">0.6ms</div>
<div style="position:absolute;top:723.00px;font-family:'Liberation Sans', sans-serif;font-size:25px;line-height:25px;color:#d4d4d4;white-space:pre;letter-spacing:0.423px;left:1147.95px;">Details</div>
<div style="position:absolute;top:723.00px;font-family:'Liberation Sans', sans-serif;font-size:25px;line-height:25px;color:#d4d4d4;white-space:pre;letter-spacing:0.139px;left:1257.95px;">Exception Traceback</div>
<div style="position:absolute;top:723.00px;font-family:'Liberation Sans', sans-serif;font-size:25px;line-height:25px;color:#d4d4d4;white-space:pre;letter-spacing:-0.488px;left:1524.65px;">Raw Data</div>
<div style="position:absolute;left:1132.8px;top:757.5px;width:1361.2px;height:2.0px;background:#3a3a3a"></div>
<div style="position:absolute;left:1132.8px;top:756.5px;width:110.20000000000005px;height:3.0px;background:#66788f"></div>
<div style="position:absolute;left:1137.6px;top:789px;width:1351.4px;height:70.5px;box-sizing:border-box;border:2px solid #3b4656;border-radius:14px"></div>
<svg style="position:absolute;left:1157px;top:808px;width:31px;height:31px" viewBox="0 0 110 110"><path fill="#3a75ad" d="M54.9 4C30 4 31.6 14.8 31.6 14.8v11.2h23.7v3.4H22.1S6.1 27.6 6.1 52.9c0 25.3 14 24.4 14 24.4h8.3V65.6s-.4-14 13.8-14h23.6s13.3.2 13.3-12.9V17.2S81 4 54.9 4zM41.8 11.6c2.4 0 4.3 1.9 4.3 4.3s-1.9 4.3-4.3 4.3-4.3-1.9-4.3-4.3 1.9-4.3 4.3-4.3z"/><path fill="#f5d13e" d="M55.6 105.4c24.9 0 23.3-10.8 23.3-10.8V83.4H55.2V80h33.2s16 1.8 16-23.5c0-25.3-14-24.4-14-24.4h-8.3v11.7s.4 14-13.8 14H44.7s-13.3-.2-13.3 12.9v21.5s-2 13.2 24.2 13.2zm13.1-7.6c-2.4 0-4.3-1.9-4.3-4.3s1.9-4.3 4.3-4.3 4.3 1.9 4.3 4.3-1.9 4.3-4.3 4.3z"/></svg>
<div style="position:absolute;top:811.00px;font-family:'Liberation Sans', sans-serif;font-size:27.5px;line-height:27.5px;color:#d6d6d6;white-space:pre;letter-spacing:1.160px;left:1205.97px;">main.py:332</div>
<div style="position:absolute;top:812.00px;font-family:'Liberation Sans', sans-serif;font-size:27px;line-height:27px;color:#9aa6b6;white-space:pre;left:1382.19px;">in</div>
<div style="position:absolute;top:811.00px;font-family:'Liberation Sans', sans-serif;font-size:26px;line-height:26px;color:#d4d4d4;white-space:pre;font-style:italic;letter-spacing:-0.450px;left:1420.97px;">raise_exception</div>
<svg style="position:absolute;left:2430.5px;top:808.5px;width:31.0px;height:31.0px;overflow:visible" viewBox="1 1 22 22" preserveAspectRatio="none" fill="none" stroke="#d8d8d8" stroke-width="1.9" stroke-linecap="round" stroke-linejoin="round" ><rect width="14" height="14" x="8" y="8" rx="2" ry="2"/><path d="M4 16c-1.1 0-2-.9-2-2V4c0-1.1.9-2 2-2h10c1.1 0 2 .9 2 2"/></svg>
<div style="position:absolute;top:912.00px;font-family:'Liberation Sans', sans-serif;font-size:35.5px;line-height:35.5px;color:#ffffff;white-space:pre;font-weight:700;letter-spacing:0.644px;left:1137.42px;">Arguments:</div>
<div style="position:absolute;top:912.00px;font-family:'Liberation Sans', sans-serif;font-size:35.5px;line-height:35.5px;color:#c8c8c8;white-space:pre;font-weight:700;letter-spacing:0.524px;left:1348.23px;">(as Python)</div>
<svg style="position:absolute;left:1143px;top:969.5px;width:12px;height:7.0px;overflow:visible" viewBox="0 0 12 7" preserveAspectRatio="none" fill="none" stroke="#8a8a8a" stroke-width="1.8" stroke-linecap="round" stroke-linejoin="round" ><path d="M1 1 L6 6 L11 1"/></svg>
<div style="position:absolute;top:963.00px;font-family:'Liberation Mono', monospace;font-size:24px;line-height:24px;color:#d4d4d4;white-space:pre;left:1159.84px;">{</div>
<div style="position:absolute;left:1149.2px;top:993.4px;width:2.0px;height:91.10000000000002px;background:#2b2d33"></div>
<div style="position:absolute;top:1006.00px;font-family:'Liberation Mono', monospace;font-size:24px;line-height:24px;color:#d4d4d4;white-space:pre;left:1179.12px;"><span style="color:#d4d4d4">&#x27;http.route&#x27;:</span> <span style="color:#ce9178;margin-left:4px">&#x27;/raise-exception&#x27;</span><span style="color:#74aee6">,</span></div>
<div style="position:absolute;top:1052.00px;font-family:'Liberation Mono', monospace;font-size:24px;line-height:24px;color:#d4d4d4;white-space:pre;left:1179.12px;"><span style="color:#d4d4d4">&#x27;method&#x27;:</span> <span style="color:#ce9178;margin-left:4px">&#x27;GET&#x27;</span><span style="color:#74aee6">,</span></div>
<div style="position:absolute;top:1091.00px;font-family:'Liberation Mono', monospace;font-size:24px;line-height:24px;color:#d4d4d4;white-space:pre;left:1144.54px;">}</div>
<svg style="position:absolute;left:1147px;top:1178.5px;width:28px;height:16.0px;overflow:visible" viewBox="0 0 28 16" preserveAspectRatio="none" fill="none" stroke="#ffffff" stroke-width="3.6" stroke-linecap="round" stroke-linejoin="round" ><path d="M2 2 L14 14 L26 2"/></svg>
<div style="position:absolute;top:1169.00px;font-family:'Liberation Sans', sans-serif;font-size:36px;line-height:36px;color:#ffffff;white-space:pre;font-weight:700;letter-spacing:0.431px;left:1185.90px;">Attributes</div>
<div style="position:absolute;left:1137px;top:1222px;width:1352.6px;height:2px;background:#394454"></div>
<svg style="position:absolute;left:1143px;top:1258px;width:12px;height:7px;overflow:visible" viewBox="0 0 12 7" preserveAspectRatio="none" fill="none" stroke="#8a8a8a" stroke-width="1.8" stroke-linecap="round" stroke-linejoin="round" ><path d="M1 1 L6 6 L11 1"/></svg>
<div style="position:absolute;top:1247.00px;font-family:'Liberation Mono', monospace;font-size:24px;line-height:24px;color:#d4d4d4;white-space:pre;left:1159.84px;">{</div>
<div style="position:absolute;top:1247.00px;font-family:'Liberation Mono', monospace;font-size:24px;line-height:24px;color:#707070;white-space:pre;font-style:italic;left:1190.28px;">6 items</div>
<div style="position:absolute;left:1149.2px;top:1278.7px;width:2.0px;height:262.29999999999995px;background:#2b2d33"></div>
<div style="position:absolute;top:1291.00px;font-family:'Liberation Mono', monospace;font-size:24px;line-height:24px;color:#d4d4d4;white-space:pre;left:1179.75px;"><span style="color:#d4d4d4">&quot;code.filepath&quot;:</span> <span style="color:#ce9178;margin-left:4px">&quot;main.py&quot;</span><span style="color:#74aee6">,</span></div>
<div style="position:absolute;top:1336.00px;font-family:'Liberation Mono', monospace;font-size:24px;line-height:24px;color:#d4d4d4;white-space:pre;left:1179.75px;"><span style="color:#d4d4d4">&quot;code.function&quot;:</span> <span style="color:#ce9178;margin-left:4px">&quot;raise_exception&quot;</span><span style="color:#74aee6">,</span></div>
<div style="position:absolute;top:1382.00px;font-family:'Liberation Mono', monospace;font-size:24px;line-height:24px;color:#d4d4d4;white-space:pre;left:1179.75px;"><span style="color:#d4d4d4">&quot;code.lineno&quot;:</span> <span style="color:#b5cea8;margin-left:4px">332</span><span style="color:#74aee6">,</span></div>
<div style="position:absolute;top:1428.00px;font-family:'Liberation Mono', monospace;font-size:24px;line-height:24px;color:#d4d4d4;white-space:pre;left:1179.75px;"><span style="color:#d4d4d4">&quot;http.route&quot;:</span> <span style="color:#ce9178;margin-left:4px">&quot;/raise-exception&quot;</span><span style="color:#74aee6">,</span></div>
<div style="position:absolute;top:1473.00px;font-family:'Liberation Mono', monospace;font-size:24px;line-height:24px;color:#d4d4d4;white-space:pre;left:1179.75px;"><span style="color:#d4d4d4">&quot;logfire.msg_template&quot;:</span> <span style="color:#ce9178;margin-left:4px">&quot;{method} {http.route} ({code.function})&quot;</span><span style="color:#74aee6">,</span></div>
<div style="position:absolute;top:1519.00px;font-family:'Liberation Mono', monospace;font-size:24px;line-height:24px;color:#d4d4d4;white-space:pre;left:1179.75px;"><span style="color:#d4d4d4">&quot;method&quot;:</span> <span style="color:#ce9178;margin-left:4px">&quot;GET&quot;</span><span style="color:#74aee6">,</span></div>
<svg style="position:absolute;left:0;top:0;width:2560px;height:1600px;overflow:visible" viewBox="0 0 2560 1600"><path d="M1125.0 445.0 H1187.0 A8 8 0 0 1 1195.0 453.0 V514.4 A8 8 0 0 1 1187.0 522.4 H1125.0 A8 8 0 0 1 1117.0 514.4 V453.0 A8 8 0 0 1 1125.0 445.0 Z M1123.0 451.0 H1189.0 V516.4 H1123.0 Z" fill="#f44a22" fill-rule="evenodd"/><path d="M2342.0 444.2 H2526.0 A8 8 0 0 1 2534.0 452.2 V516.0 A8 8 0 0 1 2526.0 524.0 H2342.0 A8 8 0 0 1 2334.0 516.0 V452.2 A8 8 0 0 1 2342.0 444.2 Z M2340.0 450.2 H2528.0 V518.0 H2340.0 Z" fill="#f44a22" fill-rule="evenodd"/><path d="M1110.0 523.0 H1267.7 A8 8 0 0 1 1275.7 531.0 V572.6 A8 8 0 0 1 1267.7 580.6 H1110.0 A8 8 0 0 1 1102.0 572.6 V531.0 A8 8 0 0 1 1110.0 523.0 Z M1108.0 529.0 H1269.7 V574.6 H1108.0 Z" fill="#f44a22" fill-rule="evenodd"/><path d="M1110.5 584.0 H2500.0 A8 8 0 0 1 2508.0 592.0 V689.0 A8 8 0 0 1 2500.0 697.0 H1110.5 A8 8 0 0 1 1102.5 689.0 V592.0 A8 8 0 0 1 1110.5 584.0 Z M1108.5 590.0 H2502.0 V691.0 H1108.5 Z" fill="#f44a22" fill-rule="evenodd"/><path d="M1110.0 707.5 H1654.0 A8 8 0 0 1 1662.0 715.5 V766.0 A8 8 0 0 1 1654.0 774.0 H1110.0 A8 8 0 0 1 1102.0 766.0 V715.5 A8 8 0 0 1 1110.0 707.5 Z M1108.0 713.5 H1656.0 V768.0 H1108.0 Z" fill="#f44a22" fill-rule="evenodd"/><path d="M1125.3 892.0 H1670.0 A8 8 0 0 1 1678.0 900.0 V1127.6 A8 8 0 0 1 1670.0 1135.6 H1125.3 A8 8 0 0 1 1117.3 1127.6 V900.0 A8 8 0 0 1 1125.3 892.0 Z M1123.3 898.0 H1672.0 V1129.6 H1123.3 Z" fill="#f44a22" fill-rule="evenodd"/><path d="M1126.0 1155.2 H1671.3 A8 8 0 0 1 1679.3 1163.2 V1543.8 A8 8 0 0 1 1671.3 1551.8 H1126.0 A8 8 0 0 1 1118.0 1543.8 V1163.2 A8 8 0 0 1 1126.0 1155.2 Z M1124.0 1161.2 H1673.3 V1545.8 H1124.0 Z" fill="#f44a22" fill-rule="evenodd"/><rect x="1091.0" y="384.0" width="80.0" height="48.0" rx="7" fill="#f44a22"/><polygon points="1120.0,430.0 1140.7,456.0 1143.0,430.0" fill="#f44a22"/><rect x="2241.0" y="462.0" width="80.0" height="48.0" rx="7" fill="#f44a22"/><polygon points="2320.0,474.2 2333.0,485.8 2320.0,498.0" fill="#f44a22"/><rect x="1009.0" y="523.0" width="80.0" height="48.0" rx="7" fill="#f44a22"/><polygon points="1088.0,536.5 1114.0,557.5 1088.0,558.5" fill="#f44a22"/><rect x="1924.0" y="714.0" width="80.0" height="48.0" rx="7" fill="#f44a22"/><polygon points="1932.0,715.0 1940.4,702.0 1956.0,715.0" fill="#f44a22"/><rect x="1626.0" y="789.0" width="80.0" height="48.0" rx="7" fill="#f44a22"/><polygon points="1634.0,790.0 1642.4,777.0 1657.6,790.0" fill="#f44a22"/><rect x="1708.0" y="1002.0" width="80.0" height="48.0" rx="7" fill="#f44a22"/><polygon points="1709.0,1015.8 1678.0,1022.2 1709.0,1035.9" fill="#f44a22"/><rect x="1715.0" y="1263.0" width="80.0" height="48.0" rx="7" fill="#f44a22"/><polygon points="1716.0,1276.6 1685.0,1283.3 1716.0,1297.1" fill="#f44a22"/></svg>
<div style="position:absolute;top:393.00px;font-family:'Liberation Sans', sans-serif;font-size:30px;line-height:30px;color:#ffffff;white-space:pre;font-weight:700;left:1101.11px;">1</div>
<div style="position:absolute;top:471.00px;font-family:'Liberation Sans', sans-serif;font-size:30px;line-height:30px;color:#ffffff;white-space:pre;font-weight:700;left:2253.46px;">2</div>
<div style="position:absolute;top:532.00px;font-family:'Liberation Sans', sans-serif;font-size:30px;line-height:30px;color:#ffffff;white-space:pre;font-weight:700;left:1021.81px;">3</div>
<div style="position:absolute;top:723.00px;font-family:'Liberation Sans', sans-serif;font-size:30px;line-height:30px;color:#ffffff;white-space:pre;font-weight:700;left:1936.55px;">4</div>
<div style="position:absolute;top:799.00px;font-family:'Liberation Sans', sans-serif;font-size:30px;line-height:30px;color:#ffffff;white-space:pre;font-weight:700;left:1639.08px;">5</div>
<div style="position:absolute;top:1011.00px;font-family:'Liberation Sans', sans-serif;font-size:30px;line-height:30px;color:#ffffff;white-space:pre;font-weight:700;left:1720.40px;">6</div>
<div style="position:absolute;top:1272.00px;font-family:'Liberation Sans', sans-serif;font-size:30px;line-height:30px;color:#ffffff;white-space:pre;font-weight:700;left:1726.71px;">7</div>
</body></html>
